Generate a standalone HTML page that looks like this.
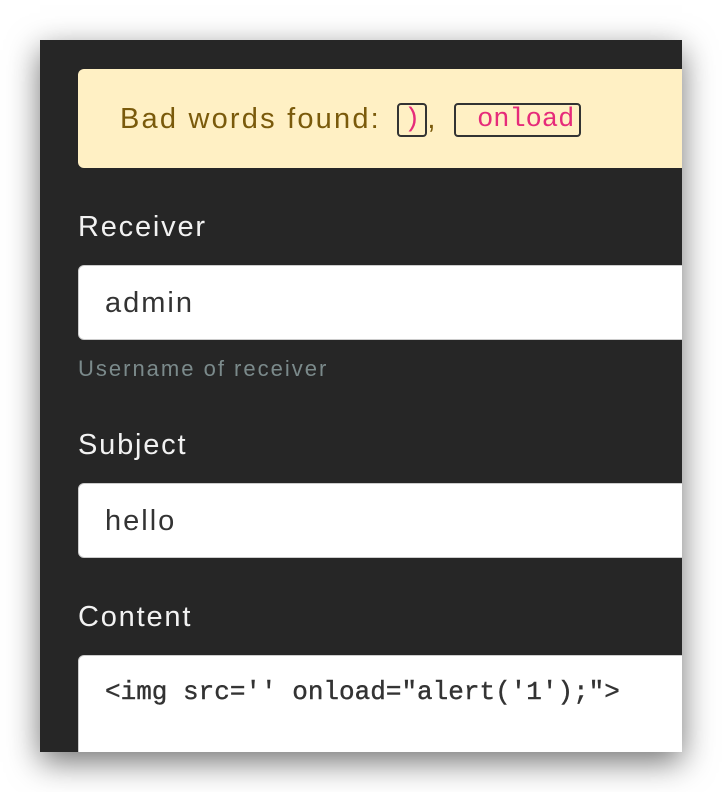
<!DOCTYPE html>
<html><head><style>
body{margin:0;width:722px;height:792px;background:#fff;position:relative;overflow:hidden;font-family:"Liberation Sans",sans-serif}
.win{position:absolute;left:40px;top:40px;width:642px;height:712px;background:#262626;box-shadow:0 10px 30px rgba(0,0,0,.55);overflow:hidden}
.alert{position:absolute;left:38px;top:29px;width:700px;height:99px;background:#fff0c4;border-radius:6px}
.alert .t{position:absolute;left:42px;top:34px;font-size:29px;letter-spacing:2.2px;color:#7a5a0b;white-space:nowrap}
code{font-family:"Liberation Mono",monospace;color:#e62b7a;font-size:27px;letter-spacing:0;border:2px solid #333;border-radius:4px;padding:0 5px;position:relative;top:-2px}
.lbl{position:absolute;left:38px;font-size:29px;letter-spacing:1.8px;color:#f2f2f2}
.inp{position:absolute;left:38px;width:700px;background:#fff;border:1px solid #ccc;border-radius:6px;height:73px}
.inp span{position:absolute;left:26px;top:21px;font-size:29px;letter-spacing:2px;color:#333}
.help{position:absolute;left:38px;top:316px;font-size:22px;letter-spacing:2px;color:#7b8a8b}
.ta{position:absolute;left:38px;top:615px;width:700px;height:120px;background:#fff;border:1px solid #ccc;border-radius:6px}
.ta span{position:absolute;left:26px;top:21px;font-family:"Liberation Mono",monospace;font-size:26px;color:#333;white-space:pre;-webkit-text-stroke:0.4px #333}
</style></head><body>
<div class="win">
<div class="alert"><div class="t">Bad words found: <code style="margin-left:6px">)</code>, <code style="margin-left:6px">&nbsp;onload</code></div></div>
<div class="lbl" style="top:171px">Receiver</div>
<div class="inp" style="top:225px"><span>admin</span></div>
<div class="help">Username of receiver</div>
<div class="lbl" style="top:389px">Subject</div>
<div class="inp" style="top:443px"><span>hello</span></div>
<div class="lbl" style="top:561px">Content</div>
<div class="ta"><span>&lt;img src='' onload="alert('1');"&gt;</span></div>
</div>
</body></html>
